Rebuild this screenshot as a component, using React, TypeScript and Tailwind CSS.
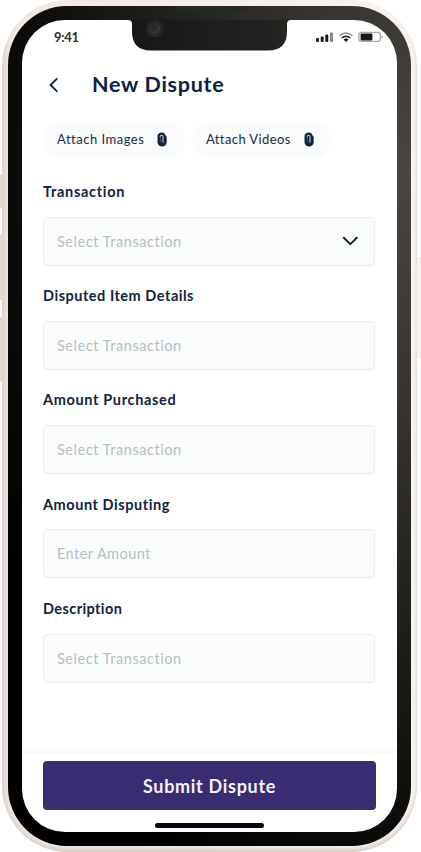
import React from "react";

type Field = { label: string; placeholder: string; select?: boolean; track: string; hint: string };

const fields: Field[] = [
  { label: "Transaction", placeholder: "Select Transaction", select: true, track: "tracking-[0.7px]", hint: "tracking-[0.55px]" },
  { label: "Disputed Item Details", placeholder: "Select Transaction", track: "tracking-[0.52px]", hint: "tracking-[0.55px]" },
  { label: "Amount Purchased", placeholder: "Select Transaction", track: "tracking-[0.65px]", hint: "tracking-[0.55px]" },
  { label: "Amount Disputing", placeholder: "Enter Amount", track: "tracking-[0.56px]", hint: "tracking-[0.45px]" },
  { label: "Description", placeholder: "Select Transaction", track: "tracking-[0.4px]", hint: "tracking-[0.55px]" },
];

function Clip() {
  return (
    <svg width="10" height="15" viewBox="0 0 10 15" fill="none" strokeLinecap="round">
      <path d="M0.5 4.5a4.1 4.1 0 0 1 8-1.1q1.2.5 1.2 2v4.5a4.6 4.6 0 0 1-9.2 0z" fill="#10233f" />
      <path d="M3.2 4.6a1.4 1.4 0 0 1 2.8 0v5.6" stroke="#c3cad3" strokeWidth="1.1" />
      <path d="M3.4 5v4.8" stroke="#5b6a7f" strokeWidth="0.7" />
    </svg>
  );
}

function Attach({ text, className }: { text: string; className: string }) {
  return (
    <button className={`flex h-9 items-center justify-between rounded-full bg-[#fafbfd] pl-3.5 text-[13px] text-[#192b46] ${className}`}>
      <span className="whitespace-nowrap pt-px">{text}</span>
      <Clip />
    </button>
  );
}

function StatusIcons() {
  return (
    <svg width="68" height="12" viewBox="0 0 68 12">
      <g fill="#1b1b1b">
        <rect x="0" y="7" width="3" height="4" rx="1" />
        <rect x="4.7" y="5.6" width="3" height="5.4" rx="1" />
        <rect x="9.3" y="3.6" width="3" height="7.4" rx="1" />
        <rect x="14" y="1.4" width="3" height="9.6" rx="1" fill="#858585" />
      </g>
      <g fill="none" strokeWidth="1.7">
        <path d="M23.6 4.7a9 9 0 0 1 12.8 0" stroke="#999" />
        <path d="M25.8 7a6 6 0 0 1 8.4 0" stroke="#252525" />
      </g>
      <path d="M27.6 8.6a3.7 3.7 0 0 1 4.8 0L30 11z" fill="#111" />
      <rect x="42.9" y="1.4" width="21.4" height="9" rx="2.3" fill="white" stroke="#aaa" strokeWidth="1.4" />
      <rect x="44.6" y="2.6" width="11.8" height="6.8" rx="1" fill="#181818" />
      <path d="M65.5 4.1c1.8.4 1.8 3.2 0 3.6z" fill="#aaa" />
    </svg>
  );
}

export default function App() {
  return (
    <div className="relative h-[852px] w-[421px] overflow-hidden bg-white px-0.5 font-['Lato','Liberation_Sans',sans-serif] text-[#10233f]">
      <i className="absolute left-0 top-[175px] h-[33px] w-[3px] bg-[#e4dad5]" />
      <i className="absolute left-0 top-[235px] h-[65px] w-[3px] bg-[#e4dad5]" />
      <i className="absolute left-0 top-[317px] h-[65px] w-[3px] bg-[#e4dad5]" />
      <i className="absolute left-[416px] top-[257px] h-[101px] w-[5px] bg-[#f8f2ee]" />

      <div className="relative h-[852px] w-[415px] rounded-[66px] bg-linear-to-r from-[#e2d8d2] via-[#f0e8e3] via-2% to-[#f9f4f1] px-1.5 pb-1.5 pt-1.5 shadow-[inset_0_-3px_4px_#d8ccc5]">
        <div className="h-[840px] w-[403px] rounded-[59px] bg-[radial-gradient(ellipse_at_100%_20%,#484641_0%,#353431_24%,#1c1c1a_50%,#000_82%)] px-3.5 pb-3.5 pt-3.5">
          <main className="flex h-[812px] w-[375px] flex-col overflow-hidden rounded-[43px] bg-white">
            <div className="flex h-[34px] items-center justify-between pl-8 pr-[13px]">
              <time className="pt-px text-[13px] font-bold tracking-[-0.3px] text-[#303030]">9:41</time>
              <StatusIcons />
            </div>

            <header className="flex h-[62px] items-center pl-[27px]">
              <svg width="10" height="16" viewBox="0 0 10 16" fill="none" stroke="#10233f" strokeWidth="1.8" strokeLinecap="round" strokeLinejoin="round" className="-mt-px">
                <path d="M7.8 1.8 1.6 8l6.2 6.2" />
              </svg>
              <h1 className="-mt-px ml-[33px] whitespace-nowrap text-[21.5px] font-bold tracking-[0.73px] text-[#0b213f]">New Dispute</h1>
            </header>

            <div className="ml-[21px] mt-[5.5px] flex gap-[7px]">
              <Attach text="Attach Images" className="w-[142px] pr-[18px] tracking-[0.5px]" />
              <Attach text="Attach Videos" className="w-[139px] pr-[17px] tracking-[0.4px]" />
            </div>

            <form className="ml-[21px] mt-[24.5px] w-[332px]">
              {fields.map((f) => (
                <label key={f.label} className="block h-[104.2px]">
                  <span className={`block h-[34.8px] whitespace-nowrap text-[14.5px] font-bold leading-5 ${f.track}`}>{f.label}</span>
                  <span className="flex h-[49px] items-center justify-between rounded border border-[#e8eded] bg-[#fafcfc] pl-[13px] pr-4">
                    <span className={`pt-px text-[14.5px] text-[#b4bfc4] ${f.hint}`}>{f.placeholder}</span>
                    {f.select && (
                      <svg width="16" height="10" viewBox="0 0 16 10" fill="none" stroke="#10233f" strokeWidth="2" strokeLinecap="round" strokeLinejoin="round">
                        <path d="m1.8 1.8 6.5 6.3 6.5-6.3" />
                      </svg>
                    )}
                  </span>
                </label>
              ))}
            </form>

            <footer className="mt-auto flex h-[85px] shrink-0 flex-col items-center">
              <div className="h-[7px] w-full bg-linear-to-b from-white to-[#f5f7f7]" />
              <button className="mt-[7px] h-[49px] w-[333px] rounded bg-[#392c70] pt-px text-[18px] font-bold tracking-[0.7px] text-[#f3f2fa]">Submit Dispute</button>
              <div className="mt-[13px] h-[5px] w-[109px] rounded-full bg-[#090713]" />
            </footer>
          </main>
        </div>

        <svg className="absolute left-[126px] top-1.5" width="165" height="46" viewBox="0 0 165 46">
          <defs>
            <linearGradient id="notch" x2="1">
              <stop stopColor="#171816" />
              <stop offset="1" stopColor="#242422" />
            </linearGradient>
          </defs>
          <path d="M0 13.5V14q4 0 4 4v7.5Q4 44.5 23 44.5H140Q159 44.5 159 25.5V18q0-4 4-4v-.5z" fill="url(#notch)" />
          <path d="M47 0h71v2q0 3-3 3H50q-3 0-3-3z" fill="#252926" />
          <circle cx="27" cy="22.5" r="9" fill="#252624" />
          <circle cx="27" cy="22.5" r="5.5" fill="#343533" />
          <circle cx="26" cy="21.5" r="3.5" fill="#292b29" />
        </svg>
      </div>
    </div>
  );
}
